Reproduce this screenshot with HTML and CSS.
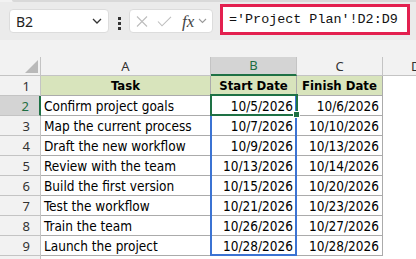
FILE: index.html
```html
<!DOCTYPE html>
<html>
<head>
<title>Project Plan</title>
<meta name="viewport" content="width=device-width, initial-scale=1.0">
<link rel="stylesheet" href="styles.css">
</head>
<body>

<div class="ribbon-edge"></div>
<div class="formula-bar">
    <div class="name-box">
        <span>B2</span>
        <svg width="10" height="6" viewBox="0 0 10 6"><polyline points="1,1 5,5 9,1" fill="none" stroke="#333" stroke-width="1.3"/></svg>
    </div>
    <div class="dots"><i></i><i></i><i></i></div>
    <div class="fx-buttons">
        <svg width="12" height="11" viewBox="0 0 12 11"><path d="M1 0.5 L11 10.5 M11 0.5 L1 10.5" stroke="#bdbdbd" stroke-width="1.1"/></svg>
        <svg width="15" height="11" viewBox="0 0 15 11"><polyline points="1,5.5 5,9.8 14,0.8" fill="none" stroke="#bdbdbd" stroke-width="1.1"/></svg>
        <span class="fx">fx</span>
        <svg width="9" height="6" viewBox="0 0 9 6"><polyline points="1,1 4.5,4.5 8,1" fill="none" stroke="#9a9a9a" stroke-width="1.1"/></svg>
    </div>
    <div class="formula-input">='Project Plan'!D2:D9</div>
</div>

<div class="sheet">
    <div class="corner"><svg width="13" height="13" viewBox="0 0 13 13"><polygon points="13,0 13,13 0,13" fill="#b9b9b9"/></svg></div>
    <div class="col-head">A</div>
    <div class="col-head selected">B</div>
    <div class="col-head">C</div>
    <div class="col-head last">D</div>

    <div class="row-head">1</div>
    <div class="cell title">Task</div>
    <div class="cell title">Start Date</div>
    <div class="cell title">Finish Date</div>
    <div class="blank"></div>

    <div class="row-head selected">2</div>
    <div class="cell">Confirm project goals</div>
    <div class="cell date">10/5/2026</div>
    <div class="cell date">10/6/2026</div>
    <div class="blank"></div>

    <div class="row-head">3</div>
    <div class="cell">Map the current process</div>
    <div class="cell date">10/7/2026</div>
    <div class="cell date">10/10/2026</div>
    <div class="blank"></div>

    <div class="row-head">4</div>
    <div class="cell">Draft the new workflow</div>
    <div class="cell date">10/9/2026</div>
    <div class="cell date">10/13/2026</div>
    <div class="blank"></div>

    <div class="row-head">5</div>
    <div class="cell">Review with the team</div>
    <div class="cell date">10/13/2026</div>
    <div class="cell date">10/14/2026</div>
    <div class="blank"></div>

    <div class="row-head">6</div>
    <div class="cell">Build the first version</div>
    <div class="cell date">10/15/2026</div>
    <div class="cell date">10/20/2026</div>
    <div class="blank"></div>

    <div class="row-head">7</div>
    <div class="cell">Test the workflow</div>
    <div class="cell date">10/21/2026</div>
    <div class="cell date">10/23/2026</div>
    <div class="blank"></div>

    <div class="row-head">8</div>
    <div class="cell">Train the team</div>
    <div class="cell date">10/26/2026</div>
    <div class="cell date">10/27/2026</div>
    <div class="blank"></div>

    <div class="row-head">9</div>
    <div class="cell">Launch the project</div>
    <div class="cell date">10/28/2026</div>
    <div class="cell date">10/28/2026</div>
    <div class="blank"></div>

    <div class="row-head"></div>
    <div class="blank"></div>
    <div class="blank"></div>
    <div class="blank"></div>
    <div class="blank"></div>

    <!-- selection overlays -->
    <div class="range"></div>
    <div class="active"><span class="handle"></span></div>
</div>

</body>
</html>
```

FILE: styles.css
```css
body {
    margin: 0;
    width: 416px;
    height: 259px;
    overflow: hidden;
    background-color: #f2f2f2;
    font-family: 'DejaVu Sans Condensed', sans-serif;
    color: #000;
}
.ribbon-edge {
    height: 2px;
    margin-left: 12px;
    background-color: #d9d9d9;
    border-bottom-left-radius: 3px;
}
.formula-bar {
    height: 38px;
    background-color: #ebebeb;
    display: flex;
    align-items: flex-start;
    padding-left: 9px;
    box-sizing: border-box;
}
.name-box {
    width: 100px;
    height: 24px;
    margin-top: 7px;
    background: #fff;
    border: 1px solid #dcdcdc;
    border-radius: 4px;
    box-sizing: border-box;
    display: flex;
    align-items: center;
    justify-content: space-between;
    padding: 0 6px 0 6px;
    font-family: 'Noto Sans', sans-serif;
    font-size: 14px;
    color: #222;
}
.dots {
    margin-left: 9px;
    margin-top: 15px;
    display: flex;
    flex-direction: column;
    gap: 2px;
}
.dots i {
    display: block;
    width: 3px;
    height: 3px;
    background: #333;
}
.fx-buttons {
    width: 84px;
    height: 24px;
    margin-left: 8px;
    margin-top: 7px;
    background: #fff;
    border: 1px solid #dcdcdc;
    border-radius: 4px;
    box-sizing: border-box;
    display: flex;
    align-items: center;
    padding-left: 6px;
    gap: 9px;
}
.fx-buttons .fx {
    font-family: 'Liberation Serif', serif;
    font-style: italic;
    font-size: 17px;
    color: #444;
    margin-left: 1px;
    margin-right: -5px;
    line-height: 1;
}
.formula-input {
    width: 190px;
    height: 31px;
    margin-left: 7px;
    margin-top: 2px;
    background: #fff;
    border: 3px solid #e3204f;
    box-sizing: border-box;
    padding-left: 6px;
    font-family: 'Liberation Mono', monospace;
    font-size: 13.4px;
    line-height: 25px;
    color: #111;
}
.sheet {
    margin-top: 17px;
    position: relative;
    display: grid;
    grid-template-columns: 41px 170px 86px 86px 1fr;
    grid-template-rows: 19px repeat(10, 20px);
}
.corner {
    border-right: 1px solid #c4c4c4;
    border-bottom: 1px solid #c4c4c4;
    display: flex;
    justify-content: flex-end;
    align-items: flex-end;
    padding: 0 2px 2px 0;
}
.corner svg {
    display: block;
}
.col-head {
    border-right: 1px solid #c4c4c4;
    border-bottom: 1px solid #c4c4c4;
    text-align: center;
    font-family: 'Noto Sans', sans-serif;
    font-size: 13px;
    line-height: 18px;
    color: #333;
}
.col-head.selected {
    background-color: #d4d4d4;
    color: #1e6e42;
    border-bottom: 2px solid #1e7145;
    line-height: 17px;
}
.col-head.last {
    border-right: none;
    text-align: left;
    padding-left: 28px;
}
.row-head {
    border-right: 1px solid #c4c4c4;
    border-bottom: 1px solid #c4c4c4;
    text-align: right;
    padding-right: 10px;
    font-family: 'Noto Sans', sans-serif;
    font-size: 13px;
    line-height: 20px;
    color: #333;
}
.row-head.selected {
    background-color: #d4d4d4;
    color: #1e6e42;
    border-right: 2px solid #1e7145;
}
.cell {
    background: #fff;
    border-right: 1px solid #ababab;
    border-bottom: 1px solid #ababab;
    padding: 0 3px;
    font-size: 13.5px;
    line-height: 20px;
    white-space: nowrap;
    overflow: hidden;
}
.cell.title {
    background-color: #d8e4bc;
    font-weight: bold;
    font-size: 13px;
    text-align: center;
}
.cell.date {
    text-align: right;
}
.blank {
    background: #fff;
}
.range {
    position: absolute;
    left: 210px;
    top: 37px;
    width: 87px;
    height: 162px;
    border: 2px solid #3b73d3;
    box-sizing: border-box;
}
.active {
    position: absolute;
    left: 210px;
    top: 37px;
    width: 88px;
    height: 22px;
    border: 2px solid #1e7145;
    box-sizing: border-box;
}
.handle {
    position: absolute;
    right: -4px;
    bottom: -4px;
    width: 5px;
    height: 5px;
    background: #1e7145;
    border: 1px solid #fff;
}
```
